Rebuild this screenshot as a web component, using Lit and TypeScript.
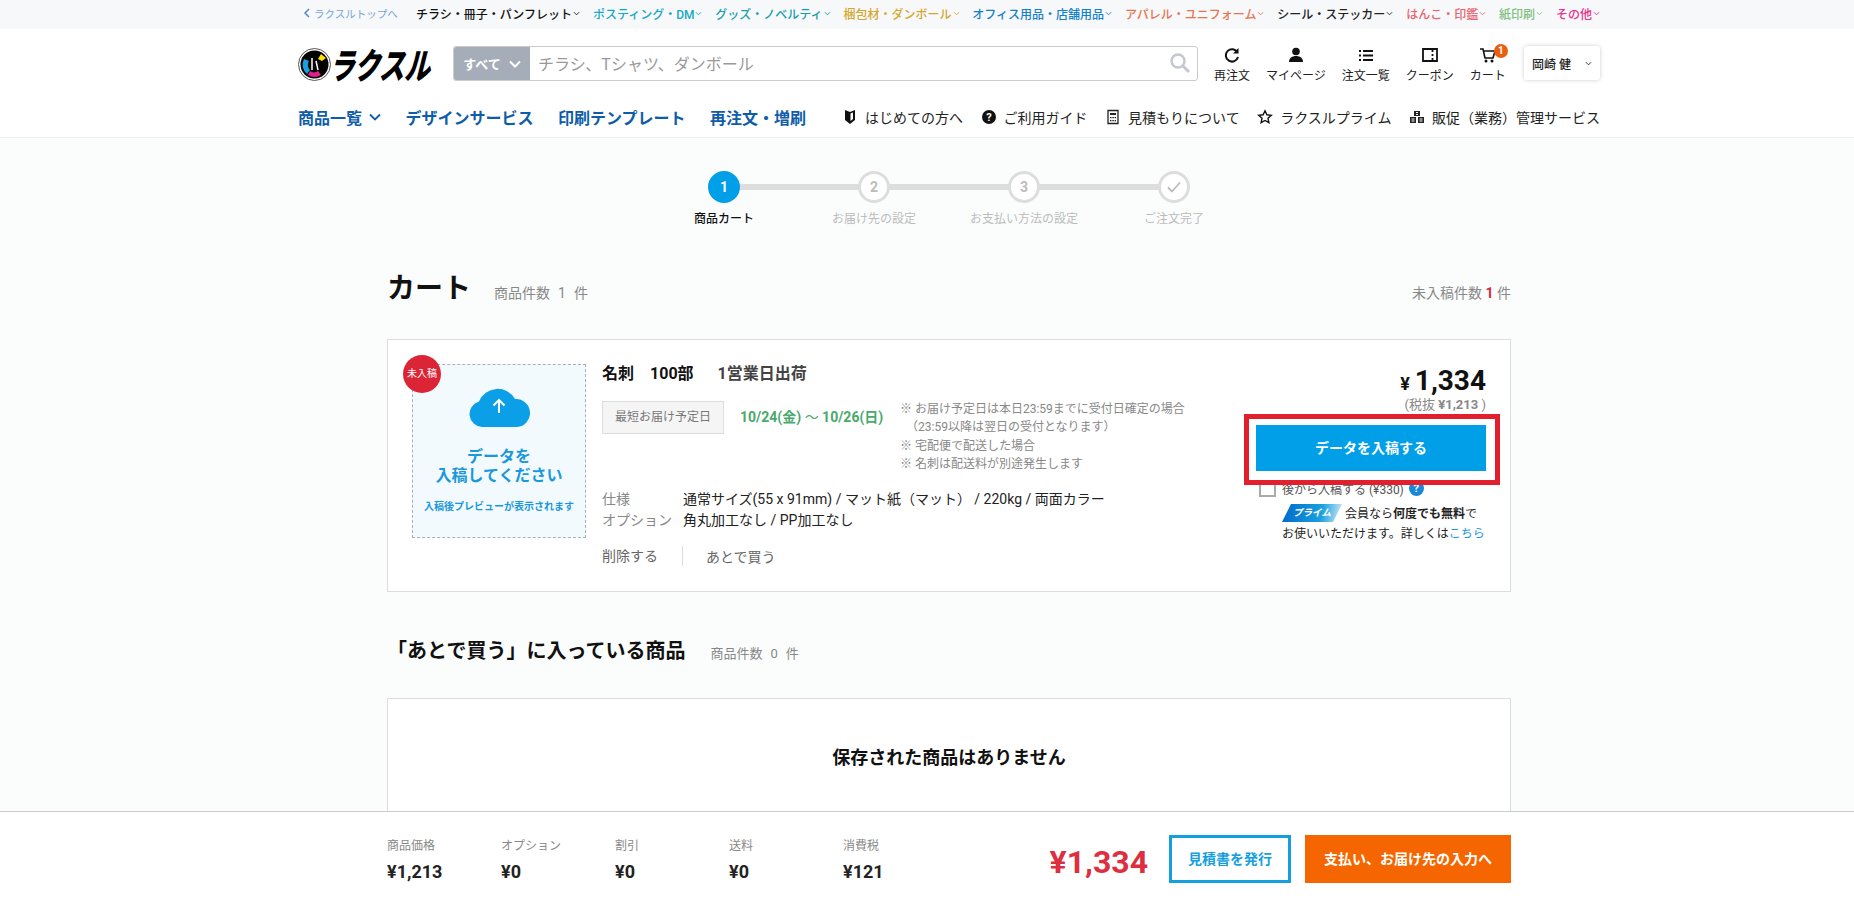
import { LitElement, html, css, svg } from 'lit'
import { customElement } from 'lit/decorators.js'

const topLinks = [
    ['チラシ・冊子・パンフレット', '#111'],
    ['ポスティング・DM', '#17a8c4'],
    ['グッズ・ノベルティ', '#16a0ae'],
    ['梱包材・ダンボール', '#d4a72c'],
    ['オフィス用品・店舗用品', '#1480c8'],
    ['アパレル・ユニフォーム', '#e8744c'],
    ['シール・ステッカー', '#222'],
    ['はんこ・印鑑', '#e8656f'],
    ['紙印刷', '#7fbf80'],
    ['その他', '#e8308c']
]

const chevron = svg`<svg class="chev" viewBox="0 0 8 5"><path d="M1 1l3 3 3-3" fill="none" stroke="currentColor" stroke-width="1"/></svg>`

const headerIcons = [
    ['再注文', svg`<path d="M15.500 7.500A6.200 6.200 0 1 0 16 12" fill="none" stroke="#111" stroke-width="2"/><path d="M16.500 3v5.500H11z" fill="#111"/>`],
    ['マイページ', svg`<circle cx="10" cy="6.500" r="3.800" fill="#111"/><path d="M3 17c0-4 3-6 7-6s7 2 7 6z" fill="#111"/>`],
    ['注文一覧', svg`<path d="M3 5h2v2H3zM3 9.500h2v2H3zM3 14h2v2H3z" fill="#111"/><path d="M7 5h10v2H7zM7 9.500h10v2H7zM7 14h10v2H7z" fill="#111"/>`],
    ['クーポン', svg`<path d="M3 4h14v12H3z" fill="none" stroke="#111" stroke-width="1.800"/><path d="M12.500 4v3M12.500 9v2M12.500 13v3" stroke="#111" stroke-width="1.800"/>`],
    ['カート', svg`<path d="M2 4h3l2 9h8l2-7H6" fill="none" stroke="#111" stroke-width="1.600"/><circle cx="8" cy="16" r="1.500" fill="#111"/><circle cx="14" cy="16" r="1.500" fill="#111"/>`]
]

const guideLinks = [
    ['はじめての方へ', svg`<path d="M8 3l5-2v10l-5 4-5-4V1z" fill="#111"/><path d="M8.500 4.500l2.500-1v6.500l-2.500 2z" fill="#fff"/>`],
    ['ご利用ガイド', svg`<circle cx="8" cy="8" r="7" fill="#111"/><text x="8" y="12" text-anchor="middle" font-size="11" font-weight="700" fill="#fff" font-family="Roboto">?</text>`],
    ['見積もりについて', svg`<path d="M3 1.500h10v13H3z" fill="none" stroke="#222" stroke-width="1.300"/><path d="M5 4h6v2H5z" fill="#222"/><path d="M5 8h1.500v1.300H5zM7.300 8h1.500v1.300H7.300zM9.600 8H11v1.300H9.600zM5 11h1.500v1.300H5zM7.300 11h1.500v1.300H7.300zM9.600 11H11v1.300H9.600z" fill="#222"/>`],
    ['ラクスルプライム', svg`<path d="M8 1.800l1.900 4 4.400.5-3.300 3 .9 4.400L8 11.500l-3.900 2.200.9-4.400-3.300-3 4.400-.5z" fill="none" stroke="#111" stroke-width="1.400"/>`],
    ['販促（業務）管理サービス', svg`<path d="M5 2h6v5H5zM1 8h6v6H1zM9 8h6v6H9z" fill="#222"/><path d="M7 3.500h2M7 5.500h2M2.500 10h3M10.500 10h3M2.500 12h3M10.500 12h3" stroke="#fff"/>`]
]

const steps = [
    ['1', '商品カート'],
    ['2', 'お届け先の設定'],
    ['3', 'お支払い方法の設定'],
    ['check', 'ご注文完了']
]

const summary = [
    ['商品価格', '¥1,213'],
    ['オプション', '¥0'],
    ['割引', '¥0'],
    ['送料', '¥0'],
    ['消費税', '¥121']
]

@customElement('app-root')
export class AppRoot extends LitElement {
    static styles = css`
        :host {
            display: flex;
            flex-direction: column;
            height: 100vh;
            overflow: hidden;
            background: #fbfdfd;
            color: #222;
            font-family: Roboto, "Noto Sans CJK JP", sans-serif;
            font-size: 14px;
        }
        .wrap {
            box-sizing: border-box;
            width: 1302px;
            margin-left: 298px;
        }
        .topbar {
            flex: none;
            height: 29px;
            background: #f7f8fa;
        }
        .topbar .wrap {
            display: flex;
            align-items: center;
            height: 29px;
            padding-bottom: 3px;
            font-size: 12px;
            font-weight: 500;
        }
        .back {
            display: flex;
            align-items: center;
            gap: 4px;
            width: 118px;
            padding-left: 6px;
            box-sizing: border-box;
            font-size: 10.500px;
            font-weight: 400;
            color: #7aa5d8;
        }
        .back svg { width: 6px; height: 10px; }
        .toplinks {
            flex: 1;
            display: flex;
            justify-content: space-between;
        }
        .toplinks span {
            display: flex;
            align-items: center;
            gap: 1px;
            white-space: nowrap;
        }
        .chev { width: 7px; height: 5px; }
        .header {
            flex: none;
            height: 109px;
            background: #fff;
            border-bottom: 1px solid #eee;
            box-sizing: border-box;
        }
        .row1 {
            display: flex;
            align-items: flex-start;
            padding-top: 17px;
            height: 53px;
            box-sizing: border-box;
        }
        .logo {
            display: flex;
            align-items: center;
            width: 155px;
            flex: none;
            gap: 4px;
            height: 36px;
        }
        .logo svg { width: 33px; height: 33px; flex: none; }
        .logo b {
            display: inline-block;
            font-family: "Noto Sans CJK JP", sans-serif;
            font-weight: 900;
            font-size: 24px;
            line-height: 36px;
            color: #000;
            transform: skewX(-14deg) scale(1.060, 1.500);
            white-space: nowrap;
        }
        .search {
            display: flex;
            width: 745px;
            height: 35px;
            flex: none;
            box-sizing: border-box;
            border: 1px solid #ccc;
            border-radius: 3px;
            overflow: hidden;
        }
        .scope {
            display: flex;
            align-items: center;
            justify-content: center;
            gap: 8px;
            width: 76px;
            background: #a5adb8;
            color: #fff;
            font-size: 13px;
            font-weight: 700;
        }
        .scope svg { width: 12px; height: 8px; }
        .field {
            flex: 1;
            display: flex;
            align-items: center;
            justify-content: space-between;
            padding: 0 6px 2px 8px;
            font-size: 16px;
            color: #999;
        }
        .field svg { width: 22px; height: 22px; }
        .tools {
            display: flex;
            gap: 16px;
            margin-left: 16px;
            margin-top: -1px;
        }
        .tool {
            position: relative;
            display: flex;
            flex-direction: column;
            align-items: center;
            font-size: 12px;
            line-height: 16px;
            white-space: nowrap;
        }
        .tool svg { width: 20px; height: 20px; margin-bottom: 3px; }
        .count {
            position: absolute;
            top: -1px;
            left: 24px;
            width: 14px;
            height: 14px;
            border-radius: 50%;
            background: #e8600f;
            color: #fff;
            font-size: 10px;
            font-weight: 700;
            line-height: 14px;
            text-align: center;
        }
        .user {
            display: flex;
            align-items: center;
            justify-content: space-between;
            width: 76px;
            height: 34px;
            margin-left: auto;
            padding: 0 8px;
            box-sizing: border-box;
            border-radius: 3px;
            background: #fff;
            box-shadow: 0 0 4px rgba(0, 0, 0, 0.2);
            font-size: 12px;
            font-weight: 500;
        }
        .row2 {
            display: flex;
            align-items: center;
            height: 55px;
            padding-top: 15px;
            box-sizing: border-box;
        }
        .mainnav {
            display: flex;
            gap: 24.500px;
            font-size: 16px;
            font-weight: 700;
            color: #0f5da8;
        }
        .mainnav span { display: flex; align-items: center; gap: 7px; }
        .mainnav svg { width: 12px; height: 8px; }
        .guide {
            display: flex;
            margin-left: auto;
            gap: 17.500px;
            color: #222;
        }
        .guide span {
            display: flex;
            align-items: center;
            gap: 7px;
            white-space: nowrap;
        }
        .guide svg { width: 16px; height: 16px; }
        main {
            flex: 1;
            min-height: 0;
            overflow: hidden;
        }
        .content {
            width: 1124px;
            margin-left: 387px;
        }
        .steps {
            display: grid;
            grid-template-columns: repeat(4, 150px);
            justify-content: center;
            padding-top: 33px;
        }
        .step {
            position: relative;
            display: flex;
            flex-direction: column;
            align-items: center;
            font-size: 12px;
            color: #bbb;
        }
        .step:not(:last-child)::after {
            content: '';
            position: absolute;
            top: 13px;
            left: 50%;
            width: 100%;
            height: 6px;
            background: #ddd;
        }
        .dot {
            position: relative;
            z-index: 1;
            display: flex;
            align-items: center;
            justify-content: center;
            width: 32px;
            height: 32px;
            box-sizing: border-box;
            border: 3px solid #ddd;
            border-radius: 50%;
            background: #fff;
            font-size: 14px;
            font-weight: 700;
        }
        .dot svg { width: 16px; height: 16px; }
        .step.on { color: #111; font-weight: 500; }
        .step.on .dot {
            border-color: #009fe8;
            background: #009fe8;
            color: #fff;
        }
        .step label { margin-top: 7px; line-height: 18px; white-space: nowrap; }
        .titlebar {
            display: flex;
            align-items: baseline;
            margin-top: 40px;
            height: 71px;
            font-size: 14px;
            color: #888;
        }
        h1 {
            margin: 0 23px 0 0;
            font-size: 28px;
            line-height: 42px;
            font-weight: 700;
            color: #111;
        }
        .titlebar .end { margin-left: auto; }
        .titlebar i { font-style: normal; color: #d9263a; font-weight: 700; }
        .num { margin: 0 8px; }
        .card {
            display: flex;
            height: 253px;
            box-sizing: border-box;
            padding: 24px 24px 0;
            background: #fff;
            border: 1px solid #ddd;
        }
        .drop {
            position: relative;
            flex: none;
            width: 174px;
            height: 174px;
            box-sizing: border-box;
            display: flex;
            flex-direction: column;
            align-items: center;
            padding-top: 20px;
            background: #f3fafd;
            border: 1px dashed #a9b2b8;
            color: #1a98dc;
            text-align: center;
        }
        .drop svg { width: 62px; height: 42px; flex: none; }
        .drop strong {
            margin-top: 20px;
            font-size: 16px;
            line-height: 19px;
        }
        .drop small {
            margin-top: 15px;
            font-size: 10px;
            line-height: 14px;
            font-weight: 700;
            white-space: nowrap;
        }
        .badge {
            position: absolute;
            top: -10px;
            left: -10px;
            width: 38px;
            height: 38px;
            border-radius: 50%;
            background: #dc2437;
            color: #fff;
            font-size: 10px;
            line-height: 38px;
            text-align: center;
        }
        .info {
            flex: 1;
            min-width: 0;
            margin-left: 16px;
        }
        .name {
            display: flex;
            font-size: 16px;
            font-weight: 700;
            line-height: 20px;
            color: #111;
            white-space: nowrap;
        }
        .name span:nth-child(2) { margin-left: 16px; }
        .name span:nth-child(3) { margin-left: 24px; color: #444; }
        .delivery {
            display: flex;
            align-items: flex-start;
            margin-top: 17px;
            height: 88px;
        }
        .tag {
            flex: none;
            width: 122px;
            height: 33px;
            box-sizing: border-box;
            border: 1px solid #ddd;
            background: #f5f5f5;
            color: #777;
            font-size: 12px;
            line-height: 31px;
            text-align: center;
        }
        .date {
            flex: none;
            width: 160px;
            margin-left: 16px;
            color: #4aa96c;
            font-size: 14px;
            line-height: 33px;
            font-weight: 700;
            white-space: nowrap;
        }
        .date em { font-style: normal; font-weight: 400; }
        .notes {
            color: #888;
            font-size: 12px;
            line-height: 18.300px;
            margin-top: -1px;
            white-space: pre;
        }
        .spec {
            display: grid;
            grid-template-columns: 81px 1fr;
            font-size: 14px;
            line-height: 21px;
            color: #222;
        }
        .spec dt { color: #888; }
        .spec dd { margin: 0; white-space: nowrap; }
        dl { margin: 0; }
        .actions {
            display: flex;
            align-items: center;
            margin-top: 15px;
            height: 20px;
            color: #666;
        }
        .actions span:first-child {
            padding-right: 24px;
            border-right: 1px solid #ddd;
            line-height: 20px;
        }
        .actions span:last-child { padding-left: 23px; }
        .side {
            flex: none;
            width: 230px;
        }
        .price {
            text-align: right;
            font-size: 28px;
            font-weight: 700;
            line-height: 34px;
            color: #111;
        }
        .price small { font-size: 18px; margin-right: 5px; }
        .tax {
            margin-top: -4px;
            text-align: right;
            font-size: 13px;
            line-height: 16px;
            color: #888;
        }
        .cta {
            position: relative;
            margin-top: 12px;
            height: 46px;
            background: #009fe8;
            color: #fff;
            font-size: 14px;
            font-weight: 700;
            line-height: 46px;
            text-align: center;
        }
        .mark {
            position: absolute;
            z-index: 1;
            inset: -11px -14px -14px -12px;
            border: 5px solid #e21f2d;
        }
        .later {
            display: flex;
            align-items: center;
            margin-top: 8px;
            margin-left: 3px;
            height: 18px;
            font-size: 12px;
            color: #555;
        }
        .box {
            width: 17px;
            height: 17px;
            box-sizing: border-box;
            border: 2px solid #aaa;
            margin-right: 6px;
            flex: none;
        }
        .help {
            width: 15px;
            height: 15px;
            margin-left: 5px;
            border-radius: 50%;
            background: #1a88d8;
            color: #fff;
            font-size: 11px;
            font-weight: 700;
            line-height: 15px;
            text-align: center;
        }
        .prime {
            margin: 7px 0 0 26px;
            font-size: 12px;
            line-height: 20px;
            color: #222;
            white-space: nowrap;
        }
        .prime b { font-weight: 700; }
        .prime a { color: #1a98dc; }
        .ptag {
            display: inline-block;
            width: 60px;
            height: 18px;
            margin-right: 3px;
            vertical-align: top;
            background: linear-gradient(100deg, #0068c8, #1aa0e0 65%, #d6ecf8);
            clip-path: polygon(9px 0, 100% 0, calc(100% - 9px) 100%, 0 100%);
            color: #fff;
            font-size: 9.500px;
            font-weight: 700;
            font-style: italic;
            line-height: 18px;
            text-align: center;
        }
        .later-head {
            display: flex;
            align-items: baseline;
            margin-top: 46px;
            font-size: 13px;
            color: #888;
        }
        h2 {
            margin: 0 25px 0 0;
            font-size: 20px;
            line-height: 26px;
            font-weight: 700;
            color: #111;
        }
        .empty {
            margin-top: 34px;
            height: 200px;
            padding-top: 47px;
            box-sizing: border-box;
            background: #fff;
            border: 1px solid #ddd;
            font-size: 18px;
            line-height: 24px;
            font-weight: 700;
            color: #111;
            text-align: center;
        }
        footer {
            flex: none;
            height: 90px;
            box-sizing: border-box;
            background: #fff;
            border-top: 1px solid #ccc;
        }
        .bar {
            display: flex;
            align-items: center;
            width: 1124px;
            height: 89px;
            margin-left: 387px;
            padding-top: 5px;
            box-sizing: border-box;
        }
        .cell {
            width: 114px;
            font-size: 12px;
            line-height: 18px;
            color: #888;
        }
        .cell b {
            display: block;
            margin-top: 6px;
            font-size: 18px;
            line-height: 21px;
            color: #222;
        }
        .total {
            margin-left: auto;
            margin-right: 21px;
            margin-top: 5px;
            font-size: 32px;
            line-height: 40px;
            font-weight: 700;
            color: #dc2f3f;
        }
        .btn {
            height: 48px;
            box-sizing: border-box;
            font-size: 14px;
            font-weight: 700;
            line-height: 42px;
            text-align: center;
        }
        .btn.quote {
            width: 122px;
            border: 3px solid #14a0de;
            color: #14a0de;
        }
        .btn.order {
            width: 206px;
            margin-left: 14px;
            background: #f56600;
            color: #fff;
            line-height: 48px;
        }
    `

    renderLogo() {
        return html`<svg viewBox="0 0 33 33">
            <circle cx="16.500" cy="16.500" r="16" fill="#fff" stroke="#555" stroke-width="1"/>
            <circle cx="16.500" cy="16.500" r="14" fill="#000"/>
            <path d="M6 11a12 12 0 0 0 3 15l3-4a7 7 0 0 1-1-9z" fill="#1aa0e0"/>
            <path d="M10 27a12 12 0 0 0 13 0l-3-4a7 7 0 0 1-8 0z" fill="#e0218a"/>
            <path d="M23 6l-3 5 4 2 4-3z" fill="#ffe100"/>
            <path d="M14 10v12M18 13l2 9" stroke="#fff" stroke-width="1.500" fill="none"/>
        </svg>`
    }

    render() {
        return html`
            <div class="topbar">
                <div class="wrap">
                    <span class="back">
                        <svg viewBox="0 0 6 10"><path d="M5 1L1 5l4 4" fill="none" stroke="#4a86d0" stroke-width="1.500"/></svg>
                        ラクスルトップへ
                    </span>
                    <div class="toplinks">
                        ${topLinks.map(([label, color]) => html`<span style="color:${color}">${label}${chevron}</span>`)}
                    </div>
                </div>
            </div>

            <div class="header">
                <div class="wrap">
                    <div class="row1">
                        <div class="logo">${this.renderLogo()}<b>ラクスル</b></div>
                        <div class="search">
                            <div class="scope">
                                すべて
                                <svg viewBox="0 0 12 8"><path d="M1 1.500l5 5 5-5" fill="none" stroke="#fff" stroke-width="2"/></svg>
                            </div>
                            <div class="field">
                                チラシ、Tシャツ、ダンボール
                                <svg viewBox="0 0 22 22"><circle cx="9" cy="9" r="6.500" fill="none" stroke="#c4c8d0" stroke-width="2.500"/><path d="M14 14l6 6" stroke="#c4c8d0" stroke-width="3"/></svg>
                            </div>
                        </div>
                        <div class="tools">
                            ${headerIcons.map(([label, icon], i) => html`
                                <div class="tool">
                                    <svg viewBox="0 0 20 20">${icon}</svg>
                                    ${label}
                                    ${i === 4 ? html`<span class="count">1</span>` : ''}
                                </div>
                            `)}
                        </div>
                        <div class="user">岡崎 健 ${chevron}</div>
                    </div>
                    <div class="row2">
                        <div class="mainnav">
                            <span>商品一覧 <svg viewBox="0 0 12 8"><path d="M1 1.500l5 5 5-5" fill="none" stroke="#0f5da8" stroke-width="1.800"/></svg></span>
                            <span>デザインサービス</span>
                            <span>印刷テンプレート</span>
                            <span>再注文・増刷</span>
                        </div>
                        <div class="guide">
                            ${guideLinks.map(([label, icon]) => html`<span><svg viewBox="0 0 16 16">${icon}</svg>${label}</span>`)}
                        </div>
                    </div>
                </div>
            </div>

            <main>
                <div class="content">
                    <div class="steps">
                        ${steps.map(([n, label], i) => html`
                            <div class="step ${i === 0 ? 'on' : ''}">
                                <div class="dot">
                                    ${n === 'check'
                                        ? html`<svg viewBox="0 0 16 16"><path d="M2 8.500l4 4 8-9" fill="none" stroke="#bbb" stroke-width="1.800"/></svg>`
                                        : n}
                                </div>
                                <label>${label}</label>
                            </div>
                        `)}
                    </div>

                    <div class="titlebar">
                        <h1>カート</h1>
                        <span>商品件数<span class="num">1</span>件</span>
                        <span class="end">未入稿件数 <i>1</i> 件</span>
                    </div>

                    <div class="card">
                        <div class="drop">
                            <span class="badge">未入稿</span>
                            <svg viewBox="0 0 62 42">
                                <path d="M14 42a13 13 0 0 1-3-25.500A20 20 0 0 1 47 14a14 14 0 0 1 2 28z" fill="#0b9fe8"/>
                                <path d="M31 28V15M25.500 20.500L31 15l5.500 5.500" fill="none" stroke="#fff" stroke-width="2"/>
                            </svg>
                            <strong>データを<br />入稿してください</strong>
                            <small>入稿後プレビューが表示されます</small>
                        </div>

                        <div class="info">
                            <div class="name"><span>名刺</span><span>100部</span><span>1営業日出荷</span></div>
                            <div class="delivery">
                                <span class="tag">最短お届け予定日</span>
                                <span class="date">10/24(金) <em>～</em> 10/26(日)</span>
                                <div class="notes">※ お届け予定日は本日23:59までに受付日確定の場合
　（23:59以降は翌日の受付となります）
※ 宅配便で配送した場合
※ 名刺は配送料が別途発生します</div>
                            </div>
                            <dl class="spec">
                                <dt>仕様</dt>
                                <dd>通常サイズ(55 x 91mm) / マット紙（マット） / 220kg / 両面カラー</dd>
                                <dt>オプション</dt>
                                <dd>角丸加工なし / PP加工なし</dd>
                            </dl>
                            <div class="actions">
                                <span>削除する</span>
                                <span>あとで買う</span>
                            </div>
                        </div>

                        <div class="side">
                            <div class="price"><small>¥</small>1,334</div>
                            <div class="tax">(税抜 <b>¥1,213</b> )</div>
                            <div class="cta">データを入稿する<span class="mark"></span></div>
                            <div class="later">
                                <span class="box"></span>
                                後から入稿する (¥330)
                                <span class="help">?</span>
                            </div>
                            <div class="prime">
                                <span class="ptag">プライム</span>会員なら<b>何度でも無料</b>で<br />
                                お使いいただけます。詳しくは<a>こちら</a>
                            </div>
                        </div>
                    </div>

                    <div class="later-head">
                        <h2>「あとで買う」に入っている商品</h2>
                        <span>商品件数<span class="num">0</span>件</span>
                    </div>

                    <div class="empty">保存された商品はありません</div>
                </div>
            </main>

            <footer>
                <div class="bar">
                    ${summary.map(([label, value]) => html`<div class="cell">${label}<b>${value}</b></div>`)}
                    <div class="total">¥1,334</div>
                    <div class="btn quote">見積書を発行</div>
                    <div class="btn order">支払い、お届け先の入力へ</div>
                </div>
            </footer>
        `
    }
}
